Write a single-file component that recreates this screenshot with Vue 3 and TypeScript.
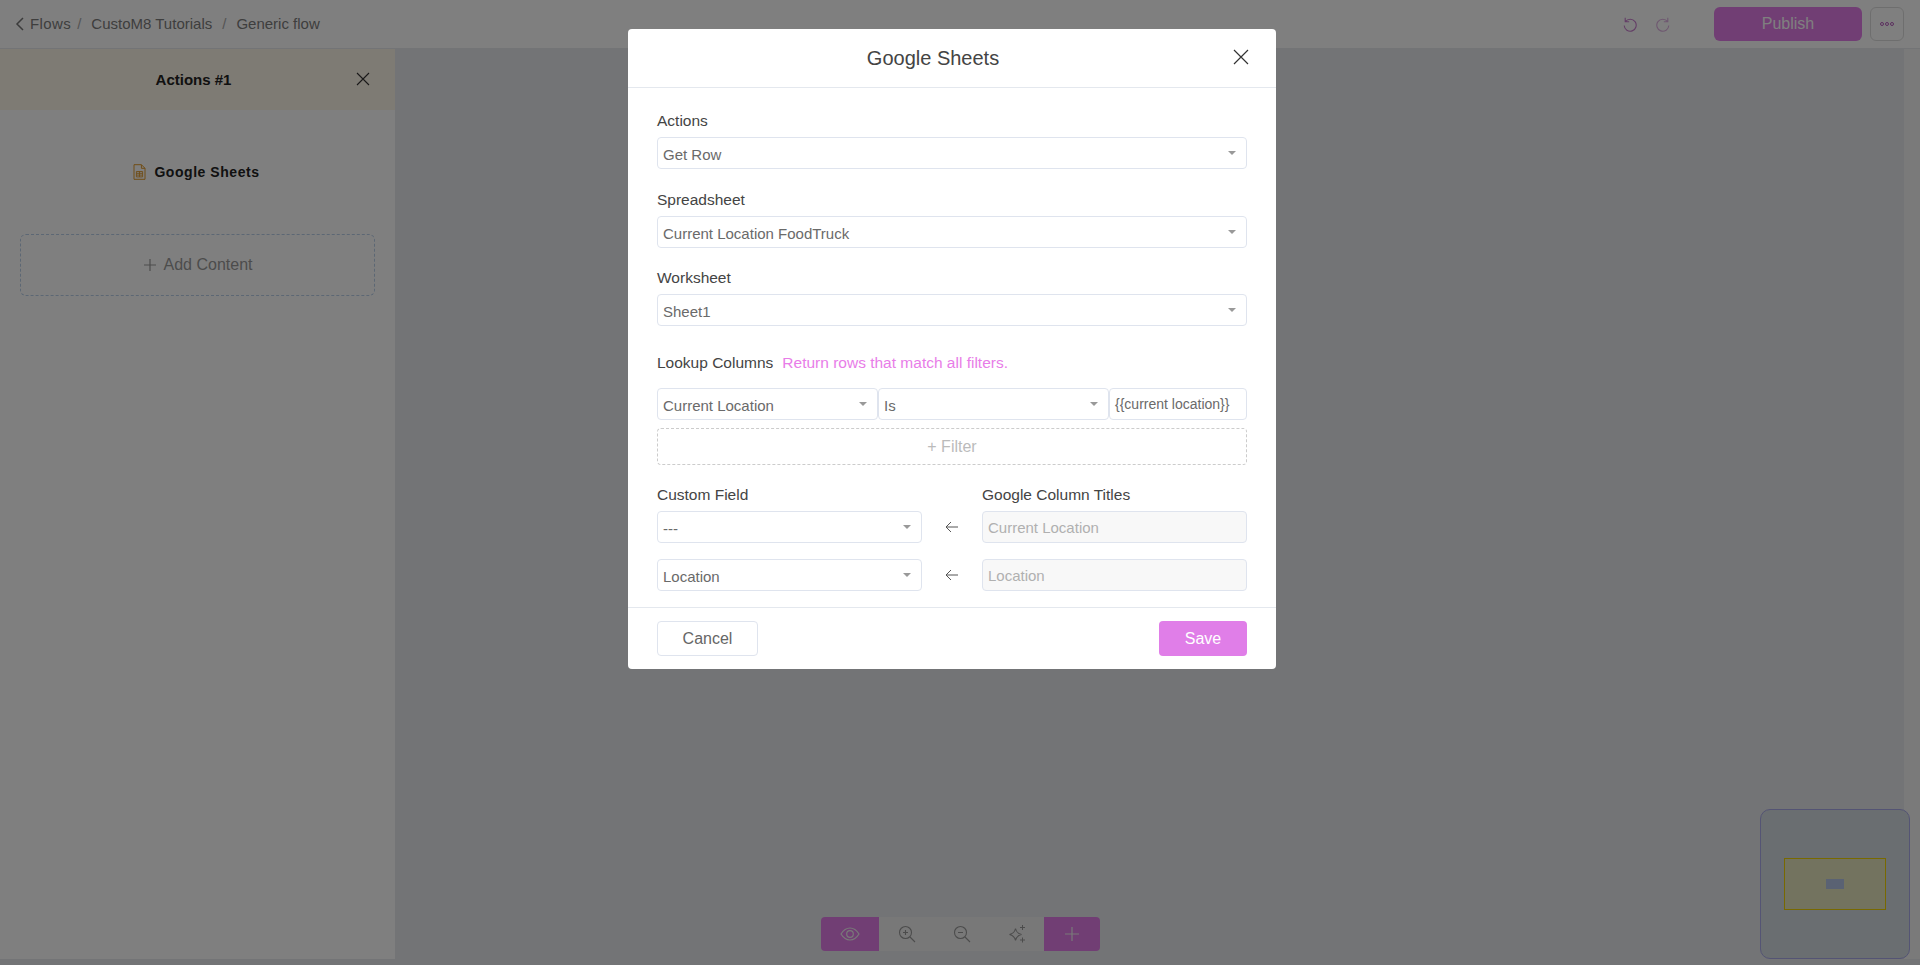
<script setup lang="ts">
const crumbs = ['CustoM8 Tutorials', 'Generic flow']

const topFields = [
  { label: 'Actions', value: 'Get Row' },
  { label: 'Spreadsheet', value: 'Current Location FoodTruck' },
  { label: 'Worksheet', value: 'Sheet1' },
]

const mappings = [
  { field: '---', column: 'Current Location' },
  { field: 'Location', column: 'Location' },
]
</script>

<template>
  <div class="page">
    <header class="topbar">
      <nav class="crumbs">
        <svg class="back" width="10" height="16" viewBox="0 0 10 16"><path d="M8 2 2 8l6 6" fill="none" stroke="currentColor" stroke-width="1.5" /></svg>
        <span class="first">Flows</span>
        <template v-for="crumb in crumbs" :key="crumb">
          <span class="sep">/</span>
          <span>{{ crumb }}</span>
        </template>
      </nav>
      <div class="top-actions">
        <svg class="history" width="16" height="16" viewBox="0 0 16 16"><path d="M3.2 1.800v4h4M3.400 5.600A6 6 0 1 1 2.200 9.500" fill="none" stroke="#c77ccd" stroke-width="1.100" /></svg>
        <svg class="history faded" width="16" height="16" viewBox="0 0 16 16"><path d="M12.800 1.800v4h-4M12.600 5.600A6 6 0 1 0 13.800 9.500" fill="none" stroke="#c77ccd" stroke-width="1.100" /></svg>
        <button class="publish">Publish</button>
        <button class="more"><i></i><i></i><i></i></button>
      </div>
    </header>

    <div class="workspace">
      <aside class="sidebar">
        <div class="side-head">
          <strong>Actions #1</strong>
          <svg class="side-close" width="14" height="14" viewBox="0 0 14 14"><path d="m1 1 12 12M13 1 1 13" fill="none" stroke="currentColor" stroke-width="1.100" /></svg>
        </div>
        <div class="side-title">
          <svg width="13" height="16" viewBox="0 0 13 16"><path d="M1 .7h7.400L12 4.300v11H1z" fill="none" stroke="#e09a2c" /><path d="M8.400.7v3.600H12" fill="none" stroke="#e09a2c" /><path d="M3.400 7.500h6.200v5.400H3.400zM3.400 9.300h6.200M3.400 11.100h6.200M6.500 7.500v5.400" fill="none" stroke="#e09a2c" stroke-width=".9" /></svg>
          <b>Google Sheets</b>
        </div>
        <div class="add-content">
          <svg width="14" height="14" viewBox="0 0 14 14"><path d="M7 1v12M1 7h12" stroke="currentColor" stroke-width="1.200" /></svg>
          <span>Add Content</span>
        </div>
      </aside>

      <main class="canvas">
        <div class="minimap">
          <div class="mini-frame"><div class="mini-node"></div></div>
        </div>
        <div class="toolbar">
          <button class="tool accent wide">
            <svg width="20" height="14" viewBox="0 0 20 14"><path d="M1 7c2.500-4 5.500-6 9-6s6.500 2 9 6c-2.500 4-5.500 6-9 6s-6.500-2-9-6z" fill="none" stroke="currentColor" stroke-width="1.200" /><circle cx="10" cy="7" r="3.300" fill="none" stroke="currentColor" stroke-width="1.200" /></svg>
          </button>
          <button class="tool">
            <svg width="18" height="18" viewBox="0 0 18 18"><circle cx="7.500" cy="7.500" r="6" fill="none" stroke="currentColor" stroke-width="1.100" /><path d="m12 12 5 5M7.500 5v5M5 7.500h5" fill="none" stroke="currentColor" stroke-width="1.100" /></svg>
          </button>
          <button class="tool">
            <svg width="18" height="18" viewBox="0 0 18 18"><circle cx="7.500" cy="7.500" r="6" fill="none" stroke="currentColor" stroke-width="1.100" /><path d="m12 12 5 5M5 7.500h5" fill="none" stroke="currentColor" stroke-width="1.100" /></svg>
          </button>
          <button class="tool">
            <svg width="18" height="18" viewBox="0 0 18 18"><path d="M7.500 3.500c.8 3.700 2.200 5.100 6 6-3.800.9-5.200 2.300-6 6-.8-3.700-2.200-5.100-6-6 3.800-.9 5.200-2.300 6-6z" fill="none" stroke="currentColor" stroke-width="1.100" /><path d="M14.500 0v5M12 2.500h5M14.500 12.500v5M12 15h5" fill="none" stroke="currentColor" stroke-width="1" /></svg>
          </button>
          <button class="tool accent">
            <svg width="14" height="14" viewBox="0 0 14 14"><path d="M7 0v14M0 7h14" stroke="currentColor" stroke-width="1.200" /></svg>
          </button>
        </div>
      </main>
    </div>
    <div class="hscroll"></div>

    <div class="overlay">
      <section class="modal">
        <div class="modal-head">
          <h2>Google Sheets</h2>
          <svg class="modal-close" width="16" height="16" viewBox="0 0 16 16"><path d="m1 1 14 14M15 1 1 15" fill="none" stroke="currentColor" stroke-width="1.200" /></svg>
        </div>

        <div class="modal-body">
          <div v-for="f in topFields" :key="f.label" class="field">
            <label>{{ f.label }}</label>
            <div class="select"><span>{{ f.value }}</span><i class="caret"></i></div>
          </div>

          <div class="lookup-title">
            <label>Lookup Columns</label>
            <em>Return rows that match all filters.</em>
          </div>
          <div class="filter-row">
            <div class="select"><span>Current Location</span><i class="caret"></i></div>
            <div class="select"><span>Is</span><i class="caret"></i></div>
            <div class="input small">{{ '{' + '{current location}' + '}' }}</div>
          </div>
          <button class="add-filter">+ Filter</button>

          <div class="map-head">
            <label>Custom Field</label>
            <label>Google Column Titles</label>
          </div>
          <div v-for="m in mappings" :key="m.column" class="map-row">
            <div class="select"><span>{{ m.field }}</span><i class="caret"></i></div>
            <svg class="arrow" width="14" height="12" viewBox="0 0 14 12"><path d="M13 6H1.500M6 1 1 6l5 5" fill="none" stroke="#555" stroke-width="1" /></svg>
            <div class="input disabled">{{ m.column }}</div>
          </div>
        </div>

        <div class="modal-foot">
          <button class="cancel">Cancel</button>
          <button class="save">Save</button>
        </div>
      </section>
    </div>
  </div>
</template>

<style>
html, body {
  margin: 0;
  height: 100%;
  overflow: hidden;
}
</style>

<style scoped>
.page {
  position: relative;
  display: flex;
  flex-direction: column;
  height: 965px;
  overflow: hidden;
  background: #e6e8ec;
  font-family: "Liberation Sans", Arial, sans-serif;
  color: #333;
}

button {
  font-family: inherit;
  cursor: pointer;
}

/* barre du haut */
.topbar {
  flex: none;
  height: 49px;
  box-sizing: border-box;
  display: flex;
  align-items: center;
  justify-content: space-between;
  padding: 0 16px 1px 15px;
  background: #fff;
  border-bottom: 1px solid #e6e8ec;
}

.crumbs {
  display: flex;
  align-items: center;
  font-size: 15px;
  color: #7d7d7d;
}

.back {
  margin-right: 5px;
  color: #777;
}

.first {
  margin-right: -4px;
  letter-spacing: .4px;
}

.sep {
  margin: 0 10px;
  color: #aaa;
}

.top-actions {
  display: flex;
  align-items: center;
}

.history {
  margin-right: 17px;
}

.faded {
  margin-right: 43px;
  opacity: .6;
}

.publish {
  width: 148px;
  height: 34px;
  border: 0;
  border-radius: 6px;
  background: #e27de8;
  color: #fff;
  font-size: 16px;
}

.more {
  width: 34px;
  height: 34px;
  margin-left: 8px;
  padding: 0;
  display: flex;
  align-items: center;
  justify-content: center;
  gap: 1px;
  border: 1px solid #ddd;
  border-radius: 6px;
  background: #fff;
}

.more i {
  width: 4px;
  height: 4px;
  box-sizing: border-box;
  border: 1px solid #b95fc0;
  border-radius: 50%;
}

/* zone de travail */
.workspace {
  flex: 1;
  min-height: 0;
  display: flex;
}

.sidebar {
  flex: none;
  width: 395px;
  background: #fff;
}

.side-head {
  position: relative;
  height: 61px;
  display: flex;
  align-items: center;
  justify-content: center;
  padding-right: 8px;
  background: #fdf6e8;
  font-size: 15px;
  color: #222;
}

.side-close {
  position: absolute;
  top: 23px;
  right: 25px;
  color: #333;
}

.side-title {
  height: 40px;
  margin-top: 42px;
  padding-right: 2px;
  display: flex;
  align-items: center;
  justify-content: center;
  gap: 8px;
  font-size: 14px;
  letter-spacing: .55px;
  color: #222;
}

.add-content {
  height: 60px;
  margin: 42px 20px 0;
  display: flex;
  align-items: center;
  justify-content: center;
  gap: 7px;
  border: 1px dashed #b9cfe8;
  border-radius: 6px;
  font-size: 16px;
  color: #999;
}

.canvas {
  position: relative;
  flex: 1;
  border-right: 16px solid #f5f5f5;
}

.minimap {
  position: absolute;
  right: -6px;
  bottom: 0;
  width: 150px;
  height: 150px;
  box-sizing: border-box;
  display: flex;
  align-items: center;
  justify-content: center;
  border: 1px solid #a8a8e8;
  border-radius: 10px;
  background: #d4dce2;
}

.mini-frame {
  width: 102px;
  height: 52px;
  box-sizing: border-box;
  display: flex;
  align-items: center;
  justify-content: center;
  border: 1px solid #f0d200;
  background: #e6e6be;
}

.mini-node {
  width: 18px;
  height: 10px;
  background: #b4c4e6;
}

.toolbar {
  position: absolute;
  left: 426px;
  bottom: 8px;
  display: flex;
  height: 34px;
  border-radius: 4px;
  overflow: hidden;
  background: #f0f0f0;
}

.tool {
  width: 55px;
  padding: 0;
  display: flex;
  align-items: center;
  justify-content: center;
  border: 0;
  background: transparent;
  color: #999;
}

.tool.accent {
  width: 56px;
  background: #e27de8;
  color: #f2f2f2;
}

.tool.wide {
  width: 58px;
}

.hscroll {
  flex: none;
  height: 6px;
}

/* fenetre modale */
.overlay {
  position: absolute;
  inset: 0;
  display: flex;
  justify-content: center;
  padding: 29px 16px 0 0;
  background: rgba(0, 0, 0, .5);
}

.modal {
  width: 648px;
  height: 640px;
  display: flex;
  flex-direction: column;
  background: #fff;
  border-radius: 4px;
  overflow: hidden;
  font-size: 14px;
}

.modal-head {
  position: relative;
  flex: none;
  height: 59px;
  display: flex;
  align-items: center;
  justify-content: center;
  padding-right: 38px;
  box-sizing: border-box;
  border-bottom: 1px solid #e4e8ee;
}

h2 {
  margin: 0;
  font-size: 20px;
  font-weight: 400;
  color: #444;
}

.modal-close {
  position: absolute;
  top: 20px;
  right: 27px;
  color: #333;
}

.modal-body {
  flex: none;
  height: 519px;
  box-sizing: border-box;
  padding: 23px 29px 0;
}

.field {
  display: flex;
  flex-direction: column;
  gap: 6px;
  margin-bottom: 20px;
}

.field:first-child {
  margin-bottom: 21px;
}

label {
  display: block;
  height: 20px;
  line-height: 20px;
  font-size: 15.5px;
  color: #444;
}

.select,
.input {
  box-sizing: border-box;
  height: 32px;
  min-width: 0;
  display: flex;
  align-items: center;
  padding: 2px 5px 0;
  border: 1px solid #dfe4ee;
  border-radius: 4px;
  background: #fff;
  font-size: 15px;
  color: #6a6a6a;
}

.select span {
  flex: 1;
}

.input {
  padding-top: 0;
}

.input.small {
  font-size: 14px;
}

.input.disabled {
  background: #f8f8f8;
  color: #b0b0b0;
}

.caret {
  width: 0;
  height: 0;
  margin: -3px 5px 0 0;
  border-left: 4px solid transparent;
  border-right: 4px solid transparent;
  border-top: 4px solid #999;
}

.lookup-title {
  display: flex;
  align-items: center;
  gap: 9px;
  margin-top: 25px;
  height: 24px;
}

.lookup-title em {
  font-style: normal;
  font-size: 15.5px;
  color: #e87de8;
}

.filter-row {
  display: grid;
  grid-template-columns: 221px 231px 138px;
  margin-top: 13px;
}

.add-filter {
  display: block;
  width: 100%;
  height: 37px;
  margin-top: 8px;
  padding: 0;
  border: 1px dashed #ccc;
  border-radius: 4px;
  background: #fff;
  font-size: 16px;
  color: #bbb;
}

.map-head {
  display: grid;
  grid-template-columns: 325px 265px;
  margin-top: 20px;
}

.map-row {
  display: grid;
  grid-template-columns: 265px 60px 265px;
  align-items: center;
  margin-top: 16px;
}

.map-head + .map-row {
  margin-top: 6px;
}

.arrow {
  justify-self: center;
}

.modal-foot {
  flex: none;
  height: 62px;
  box-sizing: border-box;
  display: flex;
  align-items: flex-start;
  justify-content: space-between;
  padding: 13px 29px 0;
  border-top: 1px solid #e4e8ee;
}

.cancel,
.save {
  height: 35px;
  border-radius: 4px;
  font-size: 16px;
}

.cancel {
  width: 101px;
  border: 1px solid #dfe4ee;
  background: #fff;
  color: #666;
}

.save {
  width: 88px;
  border: 0;
  background: #e07ee8;
  color: #fff;
}
</style>
